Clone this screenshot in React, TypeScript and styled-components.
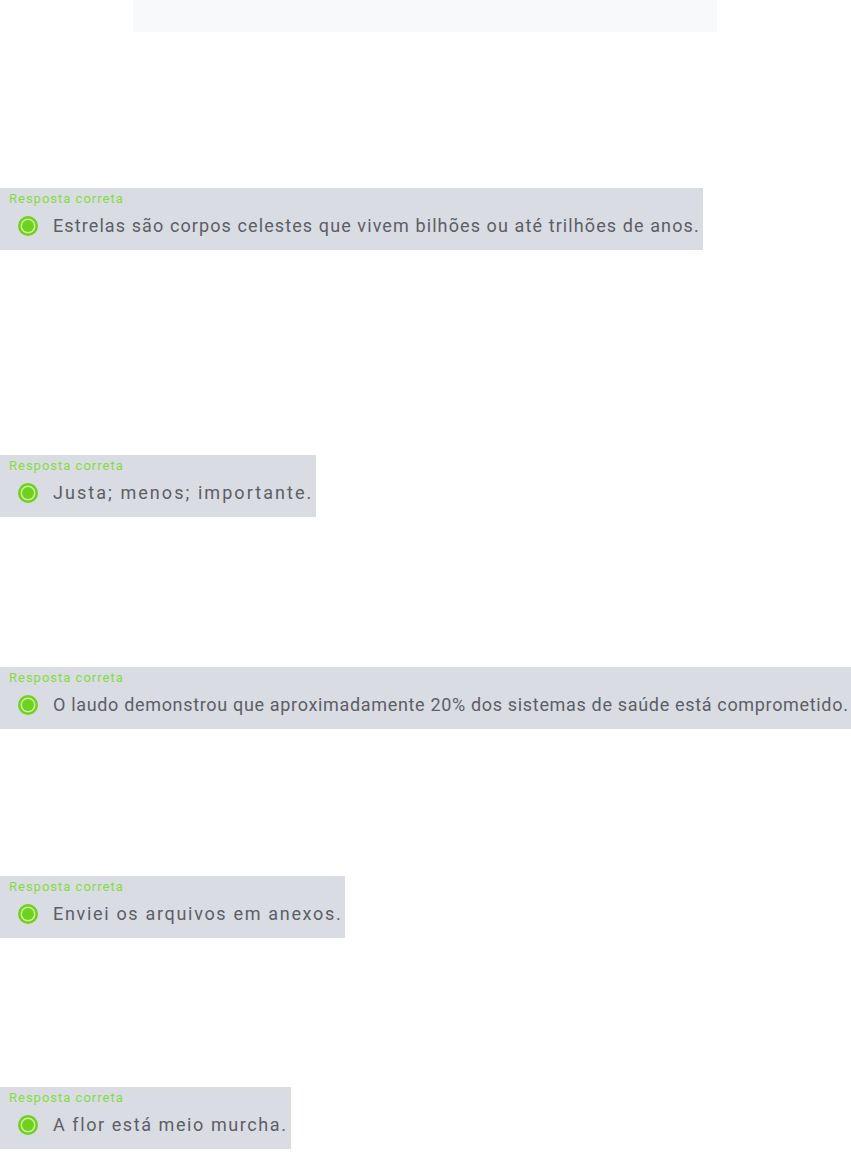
import React from "react";
import styled, { createGlobalStyle } from "styled-components";

const Global = createGlobalStyle`
  html, body { margin: 0; padding: 0; background: #ffffff; }
  body { font-family: Roboto, "Liberation Sans", sans-serif; }
`;

const Page = styled.div`
  width: 851px;
  min-height: 1161px;
  overflow: hidden;
`;

const TopBanner = styled.div`
  margin-left: 133px;
  width: 584px;
  height: 32px;
  background: #f8f9fb;
`;

const AnswerBox = styled.div<{ $gap: number }>`
  display: flex;
  flex-direction: column;
  width: fit-content;
  box-sizing: border-box;
  height: 62px;
  margin-top: ${(p) => p.$gap}px;
  background: #d9dce2;
  padding: 4px 3px 0 9px;
`;

const Label = styled.div`
  font-size: 13px;
  line-height: 14px;
  color: #84dc40;
  letter-spacing: 1px;
`;

const Row = styled.div`
  display: flex;
  align-items: center;
  margin-top: 9px;
`;

const Radio = styled.span`
  width: 20px;
  height: 20px;
  margin-left: 9px;
  border-radius: 50%;
  background: #6fd11c;
  display: flex;
  align-items: center;
  justify-content: center;
  flex-shrink: 0;
  &::after {
    content: "";
    width: 12px;
    height: 12px;
    border-radius: 50%;
    background: #6fd11c;
    box-shadow: 0 0 0 1.5px #c8f0a8;
  }
`;

const Text = styled.span<{ $spacing: number }>`
  margin-left: 15px;
  font-size: 18px;
  line-height: 22px;
  color: #5d5e66;
  letter-spacing: ${(p) => p.$spacing}px;
  white-space: nowrap;
`;

const answers = [
  { gap: 156, spacing: 1.1, text: "Estrelas são corpos celestes que vivem bilhões ou até trilhões de anos." },
  { gap: 205, spacing: 2.05, text: "Justa; menos; importante." },
  { gap: 150, spacing: 0.67, text: "O laudo demonstrou que aproximadamente 20% dos sistemas de saúde está comprometido." },
  { gap: 147, spacing: 1.68, text: "Enviei os arquivos em anexos." },
  { gap: 149, spacing: 1.58, text: "A flor está meio murcha." },
];

export default function App() {
  return (
    <Page>
      <Global />
      <TopBanner />
      {answers.map((a, i) => (
        <AnswerBox key={i} $gap={a.gap}>
          <Label>Resposta correta</Label>
          <Row>
            <Radio />
            <Text $spacing={a.spacing}>{a.text}</Text>
          </Row>
        </AnswerBox>
      ))}
    </Page>
  );
}
